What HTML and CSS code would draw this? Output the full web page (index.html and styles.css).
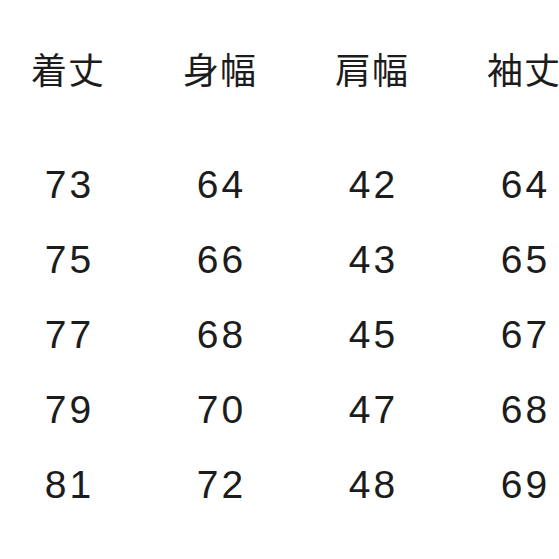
FILE: index.html
```html
<!DOCTYPE html>
<html lang="ja">
<head>
<meta charset="utf-8">
<link rel="stylesheet" href="styles.css">
</head>
<body>
<div class="chart">
  <div class="head">
    <div class="cell">着丈</div>
    <div class="cell">身幅</div>
    <div class="cell">肩幅</div>
    <div class="cell">袖丈</div>
  </div>
  <div class="rows">
    <div class="row"><div class="cell">73</div><div class="cell">64</div><div class="cell">42</div><div class="cell">64</div></div>
    <div class="row"><div class="cell">75</div><div class="cell">66</div><div class="cell">43</div><div class="cell">65</div></div>
    <div class="row"><div class="cell">77</div><div class="cell">68</div><div class="cell">45</div><div class="cell">67</div></div>
    <div class="row"><div class="cell">79</div><div class="cell">70</div><div class="cell">47</div><div class="cell">68</div></div>
    <div class="row"><div class="cell">81</div><div class="cell">72</div><div class="cell">48</div><div class="cell">69</div></div>
  </div>
</div>
</body>
</html>
```
FILE: styles.css
```css
html, body {
  margin: 0;
  padding: 0;
  background: #ffffff;
  width: 559px;
  height: 559px;
  overflow: hidden;
}
.chart {
  margin-left: -8px;
  padding-top: 50px;
  width: 608px;
  color: #1c1c1c;
}
.head, .row {
  display: grid;
  grid-template-columns: repeat(4, 152px);
}
.cell {
  text-align: center;
  white-space: nowrap;
}
.head .cell {
  font-family: "Noto Sans CJK JP", "Noto Sans", sans-serif;
  font-size: 36px;
  line-height: 36px;
  letter-spacing: 1px;
  font-weight: 400;
}
.rows {
  margin-top: 61px;
}
.row .cell {
  font-family: "Liberation Sans", Arial, sans-serif;
  font-size: 39px;
  line-height: 75px;
  letter-spacing: 3px;
  padding-left: 3px;
}
```
